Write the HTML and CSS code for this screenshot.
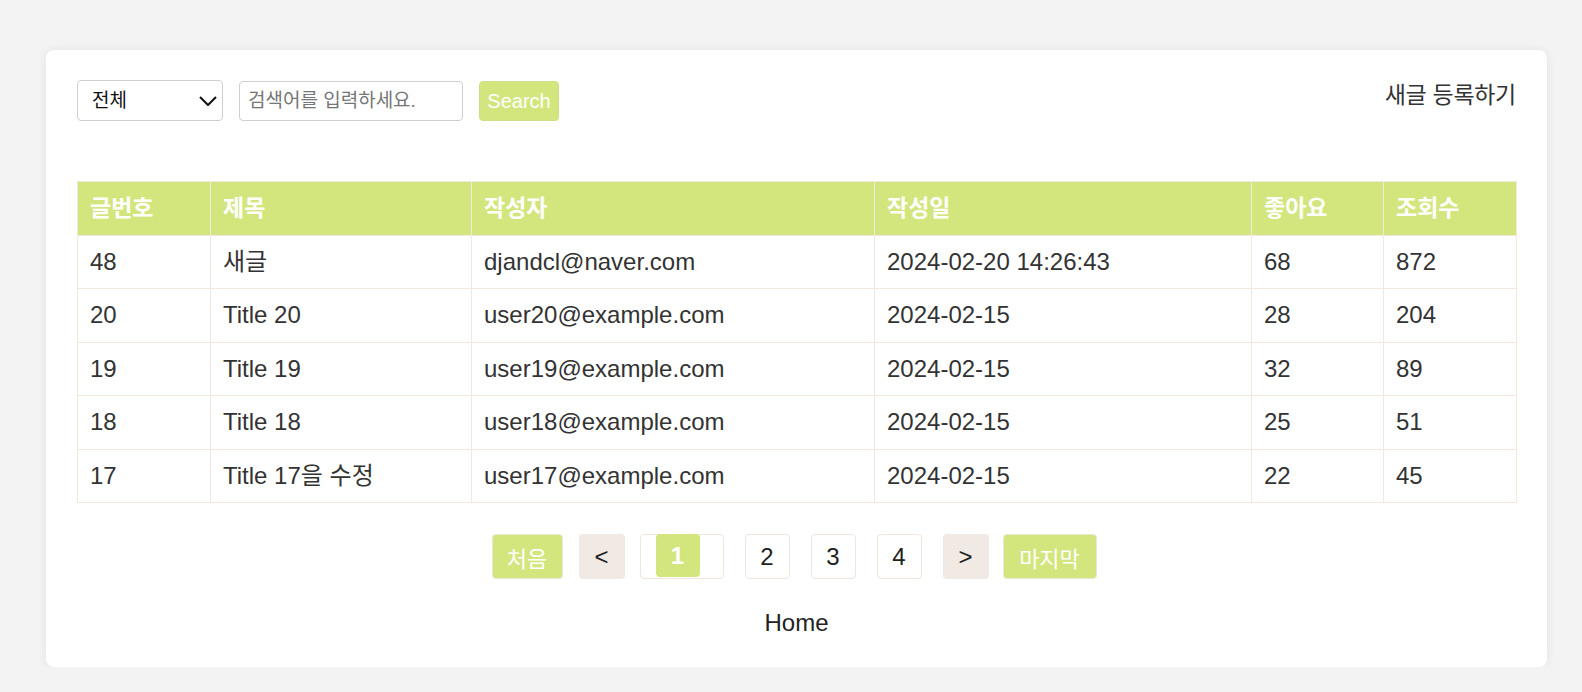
FILE: index.html
```html
<!DOCTYPE html>
<html lang="ko">
<head>
<meta charset="utf-8">
<title>게시판</title>
<link rel="stylesheet" href="styles.css">
</head>
<body>
<main class="card">
  <div class="toolbar">
    <form class="search">
      <div class="select-wrap">
        <select class="select">
          <option>전체</option>
          <option>제목</option>
          <option>작성자</option>
        </select>
        <svg class="chevron" width="18" height="10" viewBox="0 0 18 10"><path d="M1 1 L9 9 L17 1" fill="none" stroke="#111" stroke-width="2"/></svg>
      </div>
      <input class="input" type="text" placeholder="검색어를 입력하세요.">
      <button class="btn-search" type="button">Search</button>
    </form>
    <a class="write-link">새글 등록하기</a>
  </div>

  <table class="board">
    <colgroup>
      <col class="c1"><col class="c2"><col class="c3"><col class="c4"><col class="c5"><col class="c6">
    </colgroup>
    <thead>
      <tr><th>글번호</th><th>제목</th><th>작성자</th><th>작성일</th><th>좋아요</th><th>조회수</th></tr>
    </thead>
    <tbody>
      <tr><td>48</td><td>새글</td><td>djandcl@naver.com</td><td>2024-02-20 14:26:43</td><td>68</td><td>872</td></tr>
      <tr><td>20</td><td>Title 20</td><td>user20@example.com</td><td>2024-02-15</td><td>28</td><td>204</td></tr>
      <tr><td>19</td><td>Title 19</td><td>user19@example.com</td><td>2024-02-15</td><td>32</td><td>89</td></tr>
      <tr><td>18</td><td>Title 18</td><td>user18@example.com</td><td>2024-02-15</td><td>25</td><td>51</td></tr>
      <tr><td>17</td><td>Title 17을 수정</td><td>user17@example.com</td><td>2024-02-15</td><td>22</td><td>45</td></tr>
    </tbody>
  </table>

  <nav class="pager">
    <a class="pg pg-green pg-first">처음</a>
    <a class="pg pg-beige pg-prev">&lt;</a>
    <a class="pg pg-box pg-current"><span class="pg-active">1</span></a>
    <a class="pg pg-box pg-num">2</a>
    <a class="pg pg-box pg-num">3</a>
    <a class="pg pg-box pg-num pg-last-num">4</a>
    <a class="pg pg-beige pg-next">&gt;</a>
    <a class="pg pg-green pg-end">마지막</a>
  </nav>

  <div class="home"><a>Home</a></div>
</main>
</body>
</html>
```

FILE: styles.css
```css
* { box-sizing: border-box; }

html, body {
  margin: 0;
  padding: 0;
  background: #f3f3f3;
  font-family: "Liberation Sans", "Noto Sans CJK KR", sans-serif;
  color: #333;
}

.card {
  width: 1501px;
  margin: 50px 0 0 46px;
  padding: 30px 31px 30px 31px;
  background: #fff;
  border-radius: 8px;
  box-shadow: 0 0 10px rgba(0, 0, 0, 0.07);
}

.toolbar {
  display: flex;
  justify-content: space-between;
  align-items: flex-start;
  height: 41px;
}

.search {
  display: flex;
  align-items: flex-start;
  gap: 16px;
  margin: 0;
}

.select-wrap {
  position: relative;
  width: 146px;
  height: 41px;
}

.select {
  appearance: none;
  -webkit-appearance: none;
  width: 100%;
  height: 100%;
  border: 1px solid #cfcfcf;
  border-radius: 4px;
  background: #fff;
  padding: 0 0 0 14px;
  font-family: "Liberation Sans", "Noto Sans CJK KR", sans-serif;
  font-size: 19px;
  color: #111;
}

.chevron {
  position: absolute;
  right: 6px;
  top: 16px;
  pointer-events: none;
}

.input {
  width: 224px;
  height: 40px;
  margin-top: 1px;
  border: 1px solid #cfcfcf;
  border-radius: 4px;
  padding: 0 8px;
  font-family: "Liberation Sans", "Noto Sans CJK KR", sans-serif;
  font-size: 19px;
  color: #333;
}

.input::placeholder {
  color: #767676;
}

.btn-search {
  width: 80px;
  height: 40px;
  margin-top: 1px;
  border: 1px solid #d0dd86;
  border-radius: 4px;
  background: #d3e67e;
  color: #fff;
  font-family: "Liberation Sans", sans-serif;
  font-size: 20px;
  padding: 0;
}

.write-link {
  font-size: 23px;
  line-height: 28px;
  margin-top: 1px;
  color: #333;
  letter-spacing: -0.3px;
}

.board {
  width: 1439px;
  margin-top: 60px;
  border-collapse: collapse;
  table-layout: fixed;
  font-size: 24px;
}

.c1 { width: 133px; }
.c2 { width: 261px; }
.c3 { width: 403px; }
.c4 { width: 377px; }
.c5 { width: 132px; }
.c6 { width: 133px; }

.board th,
.board td {
  border: 1px solid #f2e8e0;
  padding: 12px 12px;
  line-height: 28.5px;
  text-align: left;
  white-space: nowrap;
}

.board th {
  background: #d3e67e;
  color: #fff;
  font-weight: bold;
  font-size: 23px;
}

.board td {
  color: #333;
}

.pager {
  display: flex;
  justify-content: center;
  margin-top: 31px;
  padding-right: 5px;
  height: 45px;
}

.pg {
  display: flex;
  align-items: center;
  justify-content: center;
  height: 45px;
  border-radius: 4px;
  font-size: 24px;
  color: #222;
}

.pg-green {
  background: #d3e67e;
  color: #fff;
  border: 1px solid #ece8d8;
  font-size: 22px;
}

.pg-beige {
  background: #f1e9e3;
  width: 46px;
}

.pg-box {
  background: #fff;
  border: 1px solid #f1e6de;
}

.pg-first { width: 71px; margin-right: 16px; }
.pg-prev { margin-right: 15px; }
.pg-current {
  width: 84px;
  margin-right: 21px;
  align-items: flex-start;
  justify-content: flex-start;
  padding-left: 15px;
}
.pg-active {
  display: flex;
  align-items: center;
  justify-content: center;
  width: 44px;
  height: 43px;
  margin-top: -1px;
  background: #d3e67e;
  color: #fff;
  font-weight: bold;
  border-radius: 4px;
}
.pg-num { width: 45px; margin-right: 21px; }
.pg-last-num { margin-right: 21px; }
.pg-next { margin-right: 14px; }
.pg-end { width: 94px; }

.home {
  margin-top: 30px;
  text-align: center;
  font-size: 24px;
  line-height: 28px;
  color: #222;
}
```
